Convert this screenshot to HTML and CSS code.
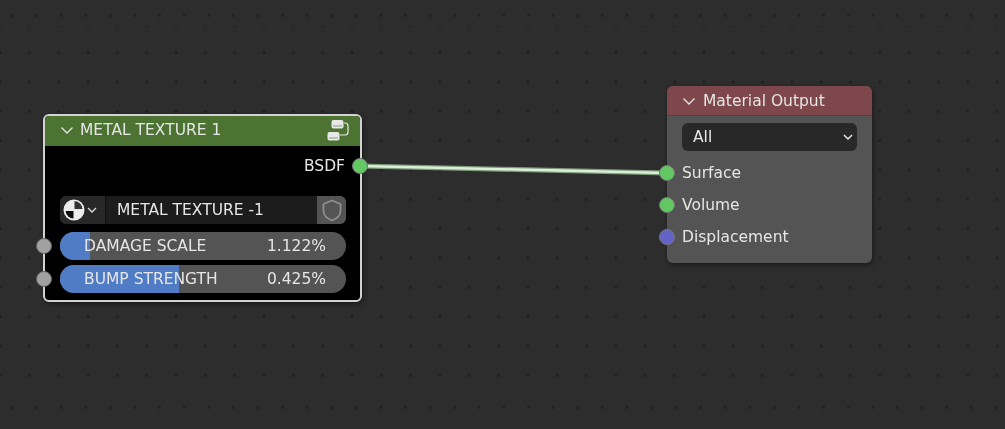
FILE: index.html
```html
<!DOCTYPE html>
<html lang="en">
<head>
    <meta charset="UTF-8">
    <title>Shader Editor</title>
    <link rel="stylesheet" href="styles.css">
</head>
<body>
    <div class="canvas">
        <svg class="link" width="1005" height="429">
            <line x1="360" y1="166" x2="667" y2="173" stroke="#7f9a7c" stroke-width="5"/>
            <line x1="360" y1="166" x2="667" y2="173" stroke="#d8f0d6" stroke-width="2.5"/>
        </svg>

        <div class="node node-group">
            <div class="node-header header-green">
                <svg class="chevron" width="14" height="14" viewBox="0 0 14 14"><path d="M1.5 4.500 7 10l5.500-5.500" fill="none" stroke="#e6e6e6" stroke-width="1.300"/></svg>
                <span class="node-title">METAL TEXTURE 1</span>
                <svg class="group-icon" width="22" height="22" viewBox="0 0 22 22">
                    <rect x="4.500" y="1" width="12" height="8.500" rx="2" fill="#e8e8e8"/>
                    <rect x="0.500" y="13" width="12" height="8.500" rx="2" fill="#e8e8e8"/>
                    <rect x="6" y="6" width="9" height="2" fill="#b9c2b0"/>
                    <rect x="2" y="18" width="9" height="2" fill="#b9c2b0"/>
                    <path d="M17 4h1q3 0 3 3v6q0 3-3 3h-5" fill="none" stroke="#e8e8e8" stroke-width="1.200"/>
                </svg>
            </div>
            <div class="output-row">
                <span>BSDF</span>
                <i class="socket socket-out green"></i>
            </div>
            <div class="datablock">
                <div class="db-browse">
                    <svg width="22" height="22" viewBox="0 0 22 22">
                        <circle cx="11" cy="11" r="10.500" fill="#ececec"/>
                        <path d="M11.500 10V2A8.500 8.500 0 0 1 19.500 10Z" fill="#303030"/>
                        <path d="M10.500 12H2.500A8.500 8.500 0 0 0 10.500 19.500Z" fill="#0c0c0c"/>
                    </svg>
                    <svg width="12" height="12" viewBox="0 0 12 12"><path d="M2 4l4 4 4-4" fill="none" stroke="#dcdcdc" stroke-width="1.300"/></svg>
                </div>
                <div class="db-name">METAL TEXTURE -1</div>
                <div class="db-shield">
                    <svg width="20" height="23" viewBox="0 0 20 23"><path d="M10 1.500 18.500 5V12Q18.500 18 10 21.500 1.500 18 1.500 12V5Z" fill="none" stroke="#8e8e8e" stroke-width="1.800"/></svg>
                </div>
            </div>
            <div class="slider-row">
                <i class="socket socket-in grey"></i>
                <div class="slider">
                    <div class="slider-fill" style="width: 10.500%"></div>
                    <span class="slider-label">DAMAGE SCALE</span>
                    <span class="slider-value">1.122%</span>
                </div>
            </div>
            <div class="slider-row">
                <i class="socket socket-in grey"></i>
                <div class="slider">
                    <div class="slider-fill" style="width: 41.600%"></div>
                    <span class="slider-label">BUMP STRENGTH</span>
                    <span class="slider-value">0.425%</span>
                </div>
            </div>
        </div>

        <div class="node node-output">
            <div class="node-header header-red">
                <svg class="chevron" width="14" height="14" viewBox="0 0 14 14"><path d="M1.500 4.500 7 10l5.500-5.500" fill="none" stroke="#e6e6e6" stroke-width="1.300"/></svg>
                <span class="node-title">Material Output</span>
            </div>
            <div class="dropdown">
                <span>All</span>
                <svg width="12" height="12" viewBox="0 0 12 12"><path d="M2 4l4 4 4-4" fill="none" stroke="#e6e6e6" stroke-width="1.500"/></svg>
            </div>
            <div class="input-row"><i class="socket socket-in green"></i><span>Surface</span></div>
            <div class="input-row"><i class="socket socket-in green"></i><span>Volume</span></div>
            <div class="input-row"><i class="socket socket-in blue"></i><span>Displacement</span></div>
        </div>
    </div>
</body>
</html>
```

FILE: styles.css
```css
html, body {
    margin: 0;
    padding: 0;
    overflow: hidden;
}
.canvas {
    position: relative;
    width: 1005px;
    height: 429px;
    overflow: hidden;
    font-family: "DejaVu Sans", sans-serif;
    font-size: 15.5px;
    color: #e6e6e6;
    filter: blur(0.35px);
    background-color: #2d2d2d;
    /* the top and bottom strips of dots are spaced tighter than the main grid */
    background-image:
        radial-gradient(circle, #212121 1.2px, transparent 2px),
        radial-gradient(circle, #212121 1.2px, transparent 2px),
        radial-gradient(circle, #282828 1.2px, transparent 2px);
    background-size: 24.6px 24.6px, 24.6px 24.6px, 29.33px 29.33px;
    background-position: -0.3px 2.7px, -0.3px 395.2px, -14.67px 12px;
    background-repeat: repeat-x;
}
/* main dot grid */
.canvas::before {
    content: "";
    position: absolute;
    left: 0;
    right: 0;
    top: 38px;
    height: 352px;
    background-image: radial-gradient(circle, #212121 1.2px, transparent 2px);
    background-size: 29.33px 29.33px;
    background-position: -14.67px 0.33px;
}
.link {
    position: absolute;
    left: 0;
    top: 0;
}
.node {
    position: absolute;
    box-sizing: border-box;
    border-radius: 6px;
    box-shadow: 1px 2px 5px rgba(0, 0, 0, 0.45);
}
.node-group {
    left: 43px;
    top: 114px;
    width: 319px;
    height: 188px;
    background: #000;
    border: 2px solid #d2d2d2;
}
.node-output {
    left: 667px;
    top: 86px;
    width: 205px;
    height: 177px;
    background: #545454;
}
.node-header {
    display: flex;
    align-items: center;
    height: 30px;
    box-sizing: border-box;
    padding-left: 15px;
    gap: 6px;
}
.header-green {
    height: 30px;
    padding-bottom: 3px;
    background: #4d7333;
    border-radius: 4px 4px 0 0;
}
.header-red {
    gap: 7px;
    background: #7d474c;
    border-radius: 6px 6px 0 0;
    border-bottom: 1px solid #5a3b3e;
}
.node-title {
    white-space: nowrap;
}
.group-icon {
    margin-left: auto;
    margin-right: 11px;
}
.socket {
    position: absolute;
    box-sizing: border-box;
    width: 16px;
    height: 16px;
    border-radius: 50%;
    border: 1px solid #777;
}
.green { background: #63c763; }
.grey { background: #a1a1a1; }
.blue { background: #6363c7; }
.output-row {
    position: relative;
    display: flex;
    justify-content: flex-end;
    align-items: center;
    height: 40px;
    padding-right: 15px;
}
.socket-out {
    right: -8px;
    top: 12px;
}
.socket-in {
    left: -8px;
}
.datablock {
    display: flex;
    height: 28px;
    margin: 10px 14px 8px 15px;
    background: #1c1c1c;
    border-radius: 6px;
    overflow: hidden;
}
.db-browse {
    display: flex;
    align-items: center;
    width: 46px;
    padding-left: 3px;
    gap: 1px;
    box-sizing: border-box;
    background: #282828;
    border-right: 1px solid #111;
}
.db-name {
    flex: 1;
    padding-left: 11px;
    line-height: 29px;
}
.db-shield {
    display: flex;
    align-items: center;
    justify-content: center;
    width: 29px;
    background: #545454;
}
.slider-row {
    position: relative;
    height: 28px;
    margin: 0 14px 5px 15px;
}
.slider-row .socket-in {
    left: -24px;
    top: 6px;
    border-color: #666;
}
.slider {
    position: relative;
    display: flex;
    justify-content: space-between;
    align-items: center;
    height: 28px;
    padding: 0 20px 0 24px;
    background: #545454;
    border-radius: 14px;
    overflow: hidden;
}
.slider-fill {
    position: absolute;
    left: 0;
    top: 0;
    bottom: 0;
    background: #4f7cc4;
}
.slider-label, .slider-value {
    position: relative;
}
.dropdown {
    display: flex;
    justify-content: space-between;
    align-items: center;
    height: 28px;
    margin: 7px 15px 6px 15px;
    padding: 0 3px 0 11px;
    background: #282828;
    border-radius: 6px;
}
.input-row {
    position: relative;
    display: flex;
    align-items: center;
    height: 32px;
    padding-left: 15px;
}
.input-row .socket {
    top: 8px;
}
```
